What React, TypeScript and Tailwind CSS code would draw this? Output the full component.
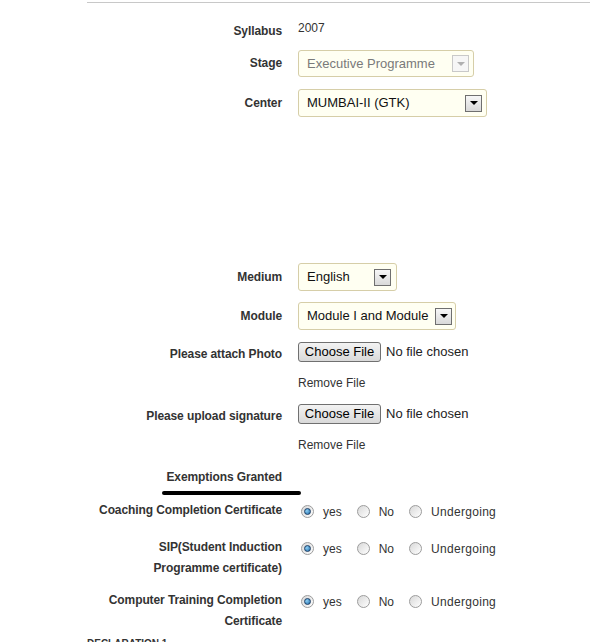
import React from "react";

const LABEL =
  "w-[190px] shrink-0 text-right text-[12px] font-bold text-[#333] leading-[21px] tracking-[-0.1px]";

function Arrow({ disabled }: { disabled?: boolean }) {
  return (
    <span
      className={
        disabled
          ? "flex w-[17px] h-[17px] items-center justify-center border border-[#c9c9c9] bg-[#f6f6f6]"
          : "flex w-[17px] h-[17px] items-center justify-center border border-[#6f6f6f] bg-linear-to-b from-[#f7f7f7] to-[#d9d9d9]"
      }
    >
      <span
        className={
          disabled
            ? "w-0 h-0 border-l-[4px] border-r-[4px] border-t-[4px] border-l-transparent border-r-transparent border-t-[#b0b0b0]"
            : "w-0 h-0 border-l-[4px] border-r-[4px] border-t-[4px] border-l-transparent border-r-transparent border-t-black"
        }
      />
    </span>
  );
}

function Select({
  text,
  cls,
  disabled,
}: {
  text: string;
  cls: string;
  disabled?: boolean;
}) {
  return (
    <div
      className={
        "flex items-center justify-between rounded-[3px] border border-[#d6cea8] bg-[#fffff2] pl-[8px] pr-[4px] text-[13px] whitespace-nowrap overflow-hidden " +
        cls +
        (disabled ? " text-[#7a7a7a]" : " text-[#111]")
      }
    >
      <span>{text}</span>
      <Arrow disabled={disabled} />
    </div>
  );
}

function FileInput() {
  return (
    <div className="flex items-center gap-[5px] text-[13px]">
      <span className="flex h-[20px] w-[83px] items-center justify-center rounded-[3px] border border-[#707070] bg-linear-to-b from-[#f3f3f3] to-[#d9d9d9] text-black">
        Choose File
      </span>
      <span className="text-[#222]">No file chosen</span>
    </div>
  );
}

function Radio({ checked }: { checked?: boolean }) {
  return (
    <span className="flex w-[13px] h-[13px] items-center justify-center rounded-full border border-[#9c9c9c] bg-linear-to-br from-[#d8d8d8] to-[#ffffff]">
      {checked && (
        <span className="w-[7px] h-[7px] rounded-full border border-[#1d3f66] bg-[radial-gradient(circle_at_35%_35%,#8fd0f5,#1f6aa8)]" />
      )}
    </span>
  );
}

function Radios() {
  return (
    <div className="flex h-[21px] items-center mt-[1px] ml-[3px] text-[12px] text-[#333]">
      <Radio checked />
      <span className="ml-[9px]">yes</span>
      <span className="ml-[15px]">
        <Radio />
      </span>
      <span className="ml-[9px]">No</span>
      <span className="ml-[15px]">
        <Radio />
      </span>
      <span className="ml-[9px] tracking-[0.3px]">Undergoing</span>
    </div>
  );
}

export default function App() {
  return (
    <div className="w-[590px] h-[642px] overflow-hidden bg-white font-['Liberation_Sans',Arial,sans-serif]">
      <div className="flex flex-col">
        <div className="mt-[2px] ml-[87px] h-px bg-[#c8c8c8]" />

        {/* Syllabus */}
        <div className="mt-[18px] flex items-start gap-4 pl-[92px]">
          <div className={LABEL + " !leading-[20px]"}>Syllabus</div>
          <div className="text-[12px] leading-[14px] text-[#333]">2007</div>
        </div>

        {/* Stage */}
        <div className="mt-[9px] flex items-center gap-4 pl-[92px]">
          <div className={LABEL}>Stage</div>
          <Select text="Executive Programme" cls="w-[176px] h-[27px]" disabled />
        </div>

        {/* Center */}
        <div className="mt-[12px] flex items-center gap-4 pl-[92px]">
          <div className={LABEL}>Center</div>
          <Select text="MUMBAI-II (GTK)" cls="w-[189px] h-[28px]" />
        </div>

        {/* Medium */}
        <div className="mt-[146px] flex items-center gap-4 pl-[92px]">
          <div className={LABEL}>Medium</div>
          <Select text="English" cls="w-[99px] h-[28px] !pr-[5px]" />
        </div>

        {/* Module */}
        <div className="mt-[11px] flex items-center gap-4 pl-[92px]">
          <div className={LABEL}>Module</div>
          <Select text="Module I and Module" cls="w-[158px] h-[28px] !pr-[3px]" />
        </div>

        {/* Photo */}
        <div className="mt-[12px] flex h-[20px] items-center gap-4 pl-[92px]">
          <div className={LABEL + " relative top-[2px]"}>Please attach Photo</div>
          <FileInput />
        </div>

        <div className="mt-[13px] flex h-[16px] items-center gap-4 pl-[92px]">
          <div className="w-[190px] shrink-0" />
          <div className="text-[12px] leading-[16px] text-[#333]">Remove File</div>
        </div>

        {/* Signature */}
        <div className="mt-[13px] flex h-[20px] items-center gap-4 pl-[92px]">
          <div className={LABEL + " relative top-[2px]"}>Please upload signature</div>
          <FileInput />
        </div>

        <div className="mt-[13px] flex h-[16px] items-center gap-4 pl-[92px]">
          <div className="w-[190px] shrink-0" />
          <div className="text-[12px] leading-[16px] text-[#333]">Remove File</div>
        </div>

        {/* Exemptions */}
        <div className="mt-[16px] flex h-[16px] items-center gap-4 pl-[92px]">
          <div className={LABEL + " !leading-[16px]"}>Exemptions Granted</div>
        </div>
        <div className="mt-[6px] ml-[162px] h-[4px] w-[139px] rounded-full bg-black" />

        {/* Coaching */}
        <div className="mt-[5px] flex items-start gap-4 pl-[92px]">
          <div className={LABEL}>Coaching Completion Certificate</div>
          <Radios />
        </div>

        {/* SIP */}
        <div className="mt-[15px] flex items-start gap-4 pl-[92px]">
          <div className={LABEL}>SIP(Student Induction Programme certificate)</div>
          <Radios />
        </div>

        {/* Computer */}
        <div className="mt-[11px] flex items-start gap-4 pl-[92px]">
          <div className={LABEL}>Computer Training Completion Certificate</div>
          <Radios />
        </div>

        <div className="mt-[6px] ml-[87px] text-[10px] font-bold leading-[12px] text-[#333]">
          DECLARATION 1
        </div>
      </div>
    </div>
  );
}
